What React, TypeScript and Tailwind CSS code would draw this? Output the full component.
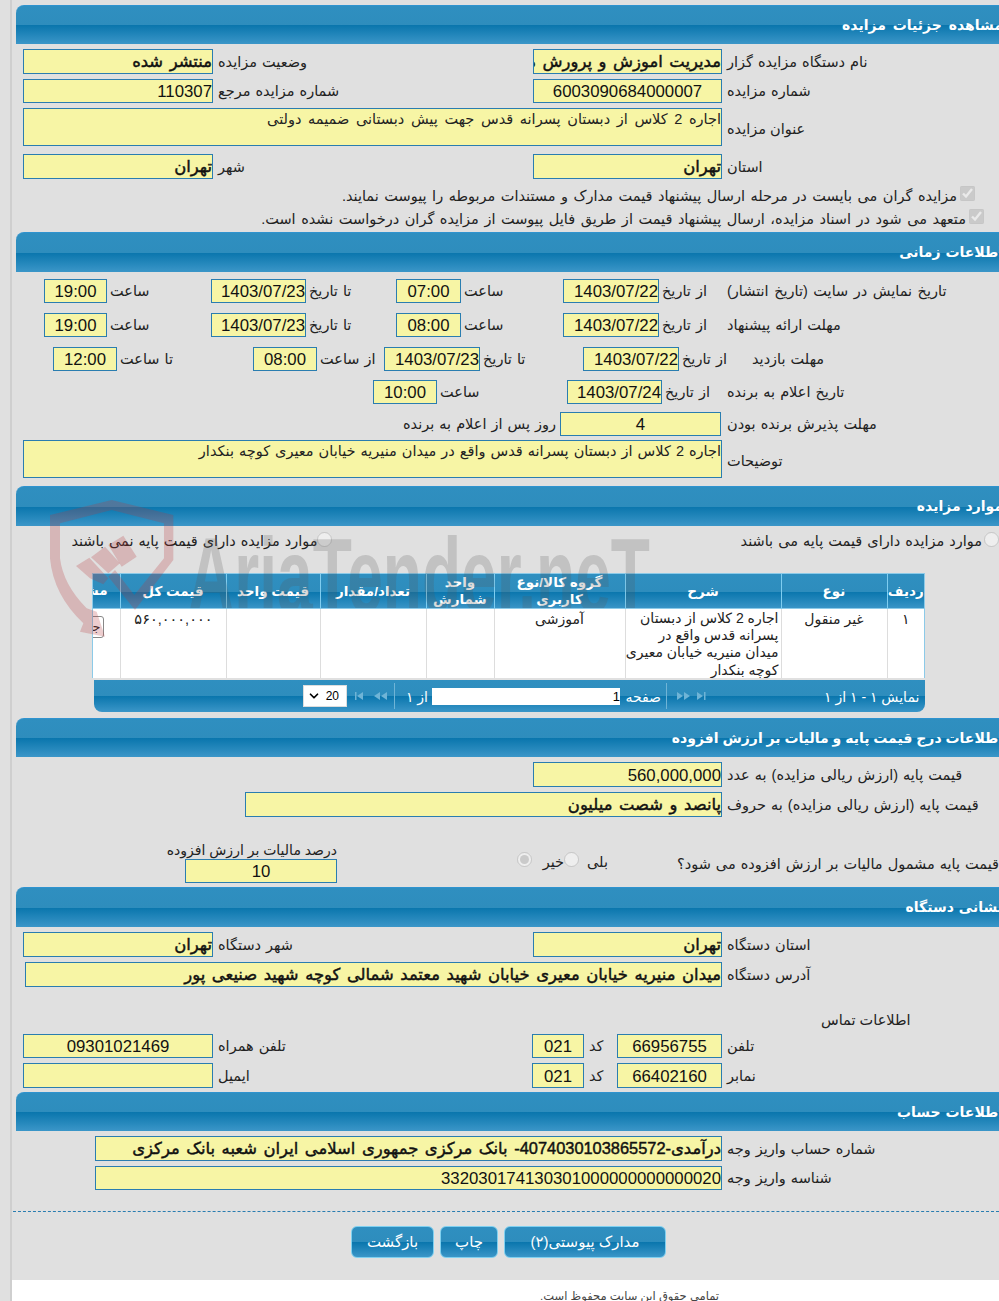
import type { ReactNode } from "react";
import { ChevronDown } from "lucide-react";

const headerBg = "bg-[linear-gradient(#2f8fc0_0%,#2e8dbd_50%,#0a76ad_51%,#3b96c8_100%)]";

function SectionHeader({ title, className = "" }: { title: string; className?: string }) {
  return (
    <div dir="rtl" className={`${headerBg} w-[987px] rounded-tl-[8px] border-t border-[#2f93cf] flex items-center text-white font-bold text-[14px] ${className}`}>
      {title}
    </div>
  );
}

function Box({ className = "", children, bold }: { className?: string; children?: ReactNode; bold?: boolean }) {
  return (
    <div dir="rtl" className={`bg-[#f7f5a5] border border-[#2a7db0] overflow-hidden whitespace-nowrap flex items-center flex-none text-[#111] ${bold ? "text-[16.4px] [-webkit-text-stroke:0.45px_#111] [word-spacing:2px]" : "text-[16.8px] pt-[2px]"} ${className}`}>
      {children}
    </div>
  );
}

function Label({ children, className = "" }: { children: ReactNode; className?: string }) {
  return <span dir="rtl" className={`text-[14.5px] text-[#222] whitespace-nowrap pt-[2px] ${className}`}>{children}</span>;
}

function Area({ text, className = "" }: { text: string; className?: string }) {
  return (
    <div dir="rtl" className={`bg-[#f7f5a5] border border-[#2a7db0] h-[38px] text-[14.5px] text-[#222] leading-[20px] flex-none ${className}`}>
      {text}
    </div>
  );
}

function Pair({ box, label, className = "" }: { box: ReactNode; label: string; className?: string }) {
  return (
    <div className={`flex items-center gap-[5px] ${className}`}>
      {box}
      <Label className="[word-spacing:1px]">{label}</Label>
    </div>
  );
}

function PagerIcon({ d }: { d: string }) {
  return (
    <svg width="16" height="10" viewBox="0 0 16 10" className="flex-none">
      <path d={d} fill="#6fb4d6" />
    </svg>
  );
}

const columns = [
  { title: "ردیف", w: "w-[37px]" },
  { title: "نوع", w: "w-[106px]" },
  { title: "شرح", w: "w-[156px]" },
  { title: "گروه کالا/نوع کاربری", w: "w-[131px]" },
  { title: "واحد شمارش", w: "w-[68px]" },
  { title: "تعداد/مقدار", w: "w-[106px]" },
  { title: "قیمت واحد", w: "w-[94px]" },
  { title: "قیمت کل", w: "w-[106px]" },
];

function ItemsTable() {
  return (
    <div className="ml-[76px] w-[833px] h-[105px] overflow-hidden border-x border-t border-[#8ccae8]">
      <table dir="rtl" className="table-fixed w-[831px] border-collapse text-[14px]">
        <thead>
          <tr className={`${headerBg} h-[34px] text-white font-bold`}>
            {columns.map((c) => (
              <th key={c.title} className={`${c.w} border-l border-[#7fcdf0] leading-[17px] font-bold text-center text-[13.5px]`}>{c.title}</th>
            ))}
            <th className="w-[27px] overflow-hidden whitespace-nowrap font-bold text-right pr-[12px] text-[13.5px]">مشاهده</th>
          </tr>
        </thead>
        <tbody>
          <tr className="h-[69px] bg-white text-[#222] align-top border-t border-[#8ccae8]">
            <td className="border-l border-[#ddd] text-center">۱</td>
            <td className="border-l border-[#ddd] text-center">غیر منقول</td>
            <td className="border-l border-[#ddd] text-right pr-[2px] pt-[1px] leading-[17.2px] overflow-hidden whitespace-nowrap">
              اجاره 2 کلاس از دبستان
              <br />
              پسرانه قدس واقع در
              <br />
              میدان منیریه خیابان معیری
              <br />
              کوچه بنکدار
            </td>
            <td className="border-l border-[#ddd] text-center">آموزشی</td>
            <td className="border-l border-[#ddd]"></td>
            <td className="border-l border-[#ddd]"></td>
            <td className="border-l border-[#ddd]"></td>
            <td className="border-l border-[#ddd] text-right pr-[13px] text-[14.5px]">۵۶۰,۰۰۰,۰۰۰</td>
            <td className="overflow-hidden">
              <div className="flex mr-[16px] mt-[7px]">
                <button className="flex-none w-[50px] h-[22px] border border-[#888] rounded-[3px] bg-white text-[13px] text-right pr-[2px] text-[#222]">جزئیات</button>
              </div>
            </td>
          </tr>
        </tbody>
      </table>
    </div>
  );
}

function Pager() {
  return (
    <div className={`${headerBg} ml-[78px] mt-[2px] w-[831px] h-[32px] rounded-b-[8px] flex items-center text-white text-[14px]`}>
      <div className="relative ml-[209px] w-[44px] h-[22px] flex-none">
        <select dir="rtl" defaultValue="20" className="appearance-none w-full h-full bg-white text-black text-[12px] pr-[7px] border border-[#ddd]">
          <option value="20">20</option>
        </select>
        <ChevronDown size={14} strokeWidth={3} className="absolute left-[4px] top-[4px] text-black pointer-events-none" />
      </div>
      <div className="ml-[6px] flex gap-[4px]">
        <PagerIcon d="M2 1h1.5v8H2zM4 5l6-4v8z" />
        <PagerIcon d="M1 5l6-4v8zM8 5l6-4v8z" />
      </div>
      <div className="ml-[5px] h-[26px] w-px bg-[#6fb4d6]" />
      <Label className="!text-white ml-[13px] w-[20px] !text-[14px]">از ۱</Label>
      <div dir="rtl" className="ml-[4px] w-[188px] h-[17px] bg-white text-black text-[13px] leading-[17px]">1</div>
      <Label className="!text-white ml-[5px] w-[36px] !text-[14px]">صفحه</Label>
      <div className="ml-[5px] h-[26px] w-px bg-[#6fb4d6]" />
      <div className="ml-[8px] flex gap-[4px]">
        <PagerIcon d="M2 1l6 4-6 4zM9 1l6 4-6 4z" />
        <PagerIcon d="M2 1l6 4-6 4zM9 1h1.5v8H9z" />
      </div>
      <Label className="!text-white ml-[113px] !text-[14px]">نمایش ۱ - ۱ از ۱</Label>
    </div>
  );
}

function ActionButton({ children, className = "" }: { children: ReactNode; className?: string }) {
  return (
    <button dir="rtl" className={`${headerBg} h-[32px] rounded-[6px] border border-[#7fd0f0] text-white text-[15px] ${className}`}>
      {children}
    </button>
  );
}

function Watermark() {
  return (
    <svg width="999" height="1301" className="absolute left-0 top-0 pointer-events-none">
      <defs>
        <clipPath id="wm-clip">
          <rect x="0" y="480" width="999" height="128" />
        </clipPath>
      </defs>
      <g clipPath="url(#wm-clip)">
        <text
          x="188"
          y="612"
          fontFamily="Liberation Sans, sans-serif"
          fontWeight="700"
          fontSize="106"
          textLength="462"
          lengthAdjust="spacingAndGlyphs"
          fill="#555"
          fillOpacity="0.22"
        >
          AriaTender.neT
        </text>
      </g>
      <g transform="translate(40 495) scale(0.3333)" fill="#b8393a" fillOpacity="0.25">
        <path d="M30 60L215 15L400 60V195L285 345L205 245L225 225L283 300L372 190V85L215 45L60 85V190Q70 270 140 340L170 350L195 425L120 410L130 385Q40 300 30 190Z" />
        <path d="M108 213L148 188L205 250L190 268L150 250Z" />
        <path d="M153 187L195 155L240 205L205 235Z" />
        <path d="M205 150L250 122L290 185L245 215Z" />
      </g>
    </svg>
  );
}

export default function App() {
  return (
    <div className="relative w-[999px] h-[1301px] overflow-hidden bg-[#e0e0e0] font-['Liberation_Sans','DejaVu_Sans',sans-serif]">
      <div className="ml-[10px] border-l-2 border-[#cfcfcf] h-full flex flex-col">
        <div className="ml-[4px] pt-[5px]">
          <SectionHeader title="مشاهده جزئیات مزایده" className="h-[39px] [word-spacing:3px]" />
          <div className="ml-[7px]">
            <div className="grid grid-cols-[510px_1fr] mt-[5px] h-[25px]">
              <Pair box={<Box bold className="w-[190px] h-[25px]">منتشر شده</Box>} label="وضعیت مزایده" />
              <Pair box={<Box bold className="w-[189px] h-[25px]">مدیریت اموزش و پرورش منطقه 12 تهران</Box>} label="نام دستگاه مزایده گزار" />
            </div>
            <div className="grid grid-cols-[510px_1fr] mt-[5px] h-[24px]">
              <Pair box={<Box className="w-[190px] h-[24px]">110307</Box>} label="شماره مزایده مرجع" />
              <Pair box={<Box className="w-[189px] h-[24px] justify-center">6003090684000007</Box>} label="شماره مزایده" />
            </div>
            <div className="flex items-center gap-[5px] mt-[5px] h-[38px]">
              <Area className="w-[699px] [word-spacing:2.6px]" text="اجاره 2 کلاس از دبستان پسرانه قدس جهت پیش دبستانی ضمیمه دولتی" />
              <Label className="pt-[6px]">عنوان مزایده</Label>
            </div>
            <div className="grid grid-cols-[510px_1fr] mt-[8px] h-[25px]">
              <Pair box={<Box bold className="w-[190px] h-[25px]">تهران</Box>} label="شهر" />
              <Pair box={<Box bold className="w-[189px] h-[25px]">تهران</Box>} label="استان" />
            </div>
          </div>
          <div dir="rtl" className="mt-[6px] h-[22px] flex items-center pr-[24px] gap-[3px]">
            <input type="checkbox" checked disabled readOnly className="w-[15px] h-[15px] m-0 -mt-[5px]" />
            <Label className="[word-spacing:1.5px]">مزایده گران می بایست در مرحله ارسال پیشنهاد قیمت مدارک و مستندات مربوطه را پیوست نمایند.</Label>
          </div>
          <div dir="rtl" className="mt-[1px] h-[22px] flex items-center pr-[15px] gap-[3px]">
            <input type="checkbox" checked disabled readOnly className="w-[15px] h-[15px] m-0 -mt-[5px]" />
            <Label className="[word-spacing:1.5px]">متعهد می شود در اسناد مزایده، ارسال پیشنهاد قیمت از طریق فایل پیوست از مزایده گران درخواست نشده است.</Label>
          </div>

          <SectionHeader title="اطلاعات زمانی" className="h-[40px] mt-[2px] [word-spacing:1px]" />
          <div className="ml-[7px]">
            <div className="grid grid-cols-[21px_167px_185px_167px_164px_1fr] mt-[7px] h-[24px]">
              <span />
              <Pair box={<Box className="w-[63px] h-[24px] justify-center">19:00</Box>} label="ساعت" className="!gap-[3px]" />
              <Pair box={<Box className="w-[95px] h-[24px]">1403/07/23</Box>} label="تا تاریخ" className="!gap-[3px]" />
              <Pair box={<Box className="w-[65px] h-[24px] justify-center">07:00</Box>} label="ساعت" className="!gap-[3px]" />
              <Pair box={<Box className="w-[96px] h-[24px]">1403/07/22</Box>} label="از تاریخ" className="!gap-[3px]" />
              <Label className="self-center justify-self-start [word-spacing:1.5px]">تاریخ نمایش در سایت (تاریخ انتشار)</Label>
            </div>
            <div className="grid grid-cols-[21px_167px_185px_167px_164px_1fr] mt-[10px] h-[24px]">
              <span />
              <Pair box={<Box className="w-[63px] h-[24px] justify-center">19:00</Box>} label="ساعت" className="!gap-[3px]" />
              <Pair box={<Box className="w-[95px] h-[24px]">1403/07/23</Box>} label="تا تاریخ" className="!gap-[3px]" />
              <Pair box={<Box className="w-[65px] h-[24px] justify-center">08:00</Box>} label="ساعت" className="!gap-[3px]" />
              <Pair box={<Box className="w-[96px] h-[24px]">1403/07/22</Box>} label="از تاریخ" className="!gap-[3px]" />
              <Label className="self-center justify-self-start [word-spacing:1px]">مهلت ارائه پیشنهاد</Label>
            </div>
            <div className="grid grid-cols-[30px_200px_131px_199px_144px_1fr] mt-[10px] h-[24px]">
              <span />
              <Pair box={<Box className="w-[64px] h-[24px] justify-center">12:00</Box>} label="تا ساعت" className="!gap-[3px]" />
              <Pair box={<Box className="w-[64px] h-[24px] justify-center">08:00</Box>} label="از ساعت" className="!gap-[3px]" />
              <Pair box={<Box className="w-[96px] h-[24px]">1403/07/23</Box>} label="تا تاریخ" className="!gap-[3px]" />
              <Pair box={<Box className="w-[96px] h-[24px]">1403/07/22</Box>} label="از تاریخ" className="!gap-[3px]" />
              <Label className="self-center justify-self-start ml-[25px] [word-spacing:1px]">مهلت بازدید</Label>
            </div>
            <div className="grid grid-cols-[350px_194px_160px_1fr] mt-[9px] h-[24px]">
              <span />
              <Pair box={<Box className="w-[64px] h-[24px] justify-center">10:00</Box>} label="ساعت" className="!gap-[3px]" />
              <Pair box={<Box className="w-[95px] h-[24px]">1403/07/24</Box>} label="از تاریخ" className="!gap-[3px]" />
              <Label className="self-center justify-self-start [word-spacing:1px]">تاریخ اعلام به برنده</Label>
            </div>
            <div className="grid grid-cols-[380px_157px_167px_1fr] mt-[8px] h-[24px]">
              <span />
              <Label className="self-center justify-self-start [word-spacing:1px]">روز پس از اعلام به برنده</Label>
              <Box className="w-[161px] h-[24px] justify-center">4</Box>
              <Label className="self-center justify-self-start [word-spacing:1px]">مهلت پذیرش برنده بودن</Label>
            </div>
            <div className="flex items-center gap-[5px] mt-[4px] h-[38px]">
              <Area className="w-[699px] [word-spacing:1px]" text="اجاره 2 کلاس از دبستان پسرانه قدس واقع در میدان منیریه خیابان معیری کوچه بنکدار" />
              <Label className="pt-[6px]">توضیحات</Label>
            </div>
          </div>

          <SectionHeader title="موارد مزایده" className="h-[40px] mt-[8px] [word-spacing:1px]" />
          <div className="mt-[4px] h-[22px] flex items-center">
            <Label className="ml-[54px] w-[249px] [word-spacing:1px]">موارد مزایده دارای قیمت پایه نمی باشند</Label>
            <input type="radio" disabled className="w-[15px] h-[15px] m-0 -mt-[4px] flex-none" />
            <Label className="ml-[408px] w-[243px] [word-spacing:1px]">موارد مزایده دارای قیمت پایه می باشند</Label>
            <input type="radio" disabled className="w-[15px] h-[15px] m-0 ml-[2px] -mt-[4px] flex-none" />
          </div>
          <div className="mt-[21px]">
            <ItemsTable />
            <Pager />
          </div>

          <SectionHeader title="اطلاعات درج قیمت پایه و مالیات بر ارزش افزوده" className="h-[39px] mt-[6px]" />
          <div className="ml-[7px]">
            <div className="ml-[510px] mt-[5px] h-[25px]">
              <Pair box={<Box className="w-[189px] h-[25px]">560,000,000</Box>} label="قیمت پایه (ارزش ریالی مزایده) به عدد" />
            </div>
            <div className="ml-[222px] mt-[5px] h-[25px]">
              <Pair box={<Box bold className="w-[477px] h-[25px]">پانصد و شصت میلیون</Box>} label="قیمت پایه (ارزش ریالی مزایده) به حروف" />
            </div>
            <div className="flex mt-[25px] h-[41px]">
              <div className="ml-[146px] w-[168px] flex flex-col items-end">
                <Label className="h-[17px] leading-[17px] !pt-0 !text-[14px]">درصد مالیات بر ارزش افزوده</Label>
                <Box className="w-[152px] h-[24px] justify-center">10</Box>
              </div>
              <div className="ml-[180px] w-[169px] flex items-center h-[24px] mt-[8px]">
                <input type="radio" disabled defaultChecked name="vat" className="w-[15px] h-[15px] m-0 -mt-[5px] flex-none" />
                <Label className="ml-[8px] w-[24px]">خیر</Label>
                <input type="radio" disabled name="vat" className="w-[15px] h-[15px] m-0 -mt-[5px] flex-none" />
                <Label className="ml-[8px]">بلی</Label>
              </div>
              <Label className="mt-[10px] [word-spacing:1px]">قیمت پایه مشمول مالیات بر ارزش افزوده می شود؟</Label>
            </div>
          </div>

          <SectionHeader title="نشانی دستگاه" className="h-[40px] mt-[4px] [word-spacing:1px]" />
          <div className="ml-[7px]">
            <div className="grid grid-cols-[510px_1fr] mt-[5px] h-[25px]">
              <Pair box={<Box bold className="w-[190px] h-[25px]">تهران</Box>} label="شهر دستگاه" />
              <Pair box={<Box bold className="w-[189px] h-[25px]">تهران</Box>} label="استان دستگاه" />
            </div>
            <div className="ml-[2px] mt-[5px] h-[25px]">
              <Pair box={<Box bold className="w-[697px] h-[25px]">میدان منیریه خیابان معیری خیابان شهید معتمد شمالی کوچه شهید صنیعی پور</Box>} label="آدرس دستگاه" />
            </div>
            <div className="mt-[23px] h-[20px] ml-[798px] flex items-center">
              <Label>اطلاعات تماس</Label>
            </div>
            <div className="grid grid-cols-[509px_85px_1fr] mt-[4px] h-[24px]">
              <Pair box={<Box className="w-[190px] h-[24px] justify-center">09301021469</Box>} label="تلفن همراه" />
              <Pair box={<Box className="w-[52px] h-[24px] justify-center">021</Box>} label="کد" />
              <Pair box={<Box className="w-[105px] h-[24px] justify-center">66956755</Box>} label="تلفن" />
            </div>
            <div className="grid grid-cols-[509px_85px_1fr] mt-[5px] h-[25px]">
              <Pair box={<Box className="w-[190px] h-[25px]" />} label="ایمیل" />
              <Pair box={<Box className="w-[52px] h-[25px] justify-center">021</Box>} label="کد" />
              <Pair box={<Box className="w-[105px] h-[25px] justify-center">66402160</Box>} label="نمابر" />
            </div>
          </div>

          <SectionHeader title="اطلاعات حساب" className="h-[39px] mt-[4px] [word-spacing:1px]" />
          <div className="ml-[79px]">
            <div className="mt-[5px] h-[25px]">
              <Pair box={<Box bold className="w-[627px] h-[25px]">درآمدی-4074030103865572- بانک مرکزی جمهوری اسلامی ایران شعبه بانک مرکزی</Box>} label="شماره حساب واریز وجه" />
            </div>
            <div className="mt-[5px] h-[24px]">
              <Pair box={<Box className="w-[627px] h-[24px]">332030174130301000000000000020</Box>} label="شناسه واریز وجه" />
            </div>
          </div>

          <div className="-ml-[3px] mt-[21px] border-t border-dashed border-[#2a7db0]" />
          <div className="mt-[14px] flex gap-[6px] ml-[335px]">
            <ActionButton className="w-[83px]">بازگشت</ActionButton>
            <ActionButton className="w-[58px]">چاپ</ActionButton>
            <ActionButton className="w-[162px]">مدارک پیوستی(۲)</ActionButton>
          </div>
        </div>
        <div dir="rtl" className="mt-[22px] flex-1 bg-white pr-[280px] pt-[8px] text-[11.5px] text-[#444] overflow-hidden">
          تمامی حقوق این سایت محفوظ است.
        </div>
      </div>
      <Watermark />
    </div>
  );
}
